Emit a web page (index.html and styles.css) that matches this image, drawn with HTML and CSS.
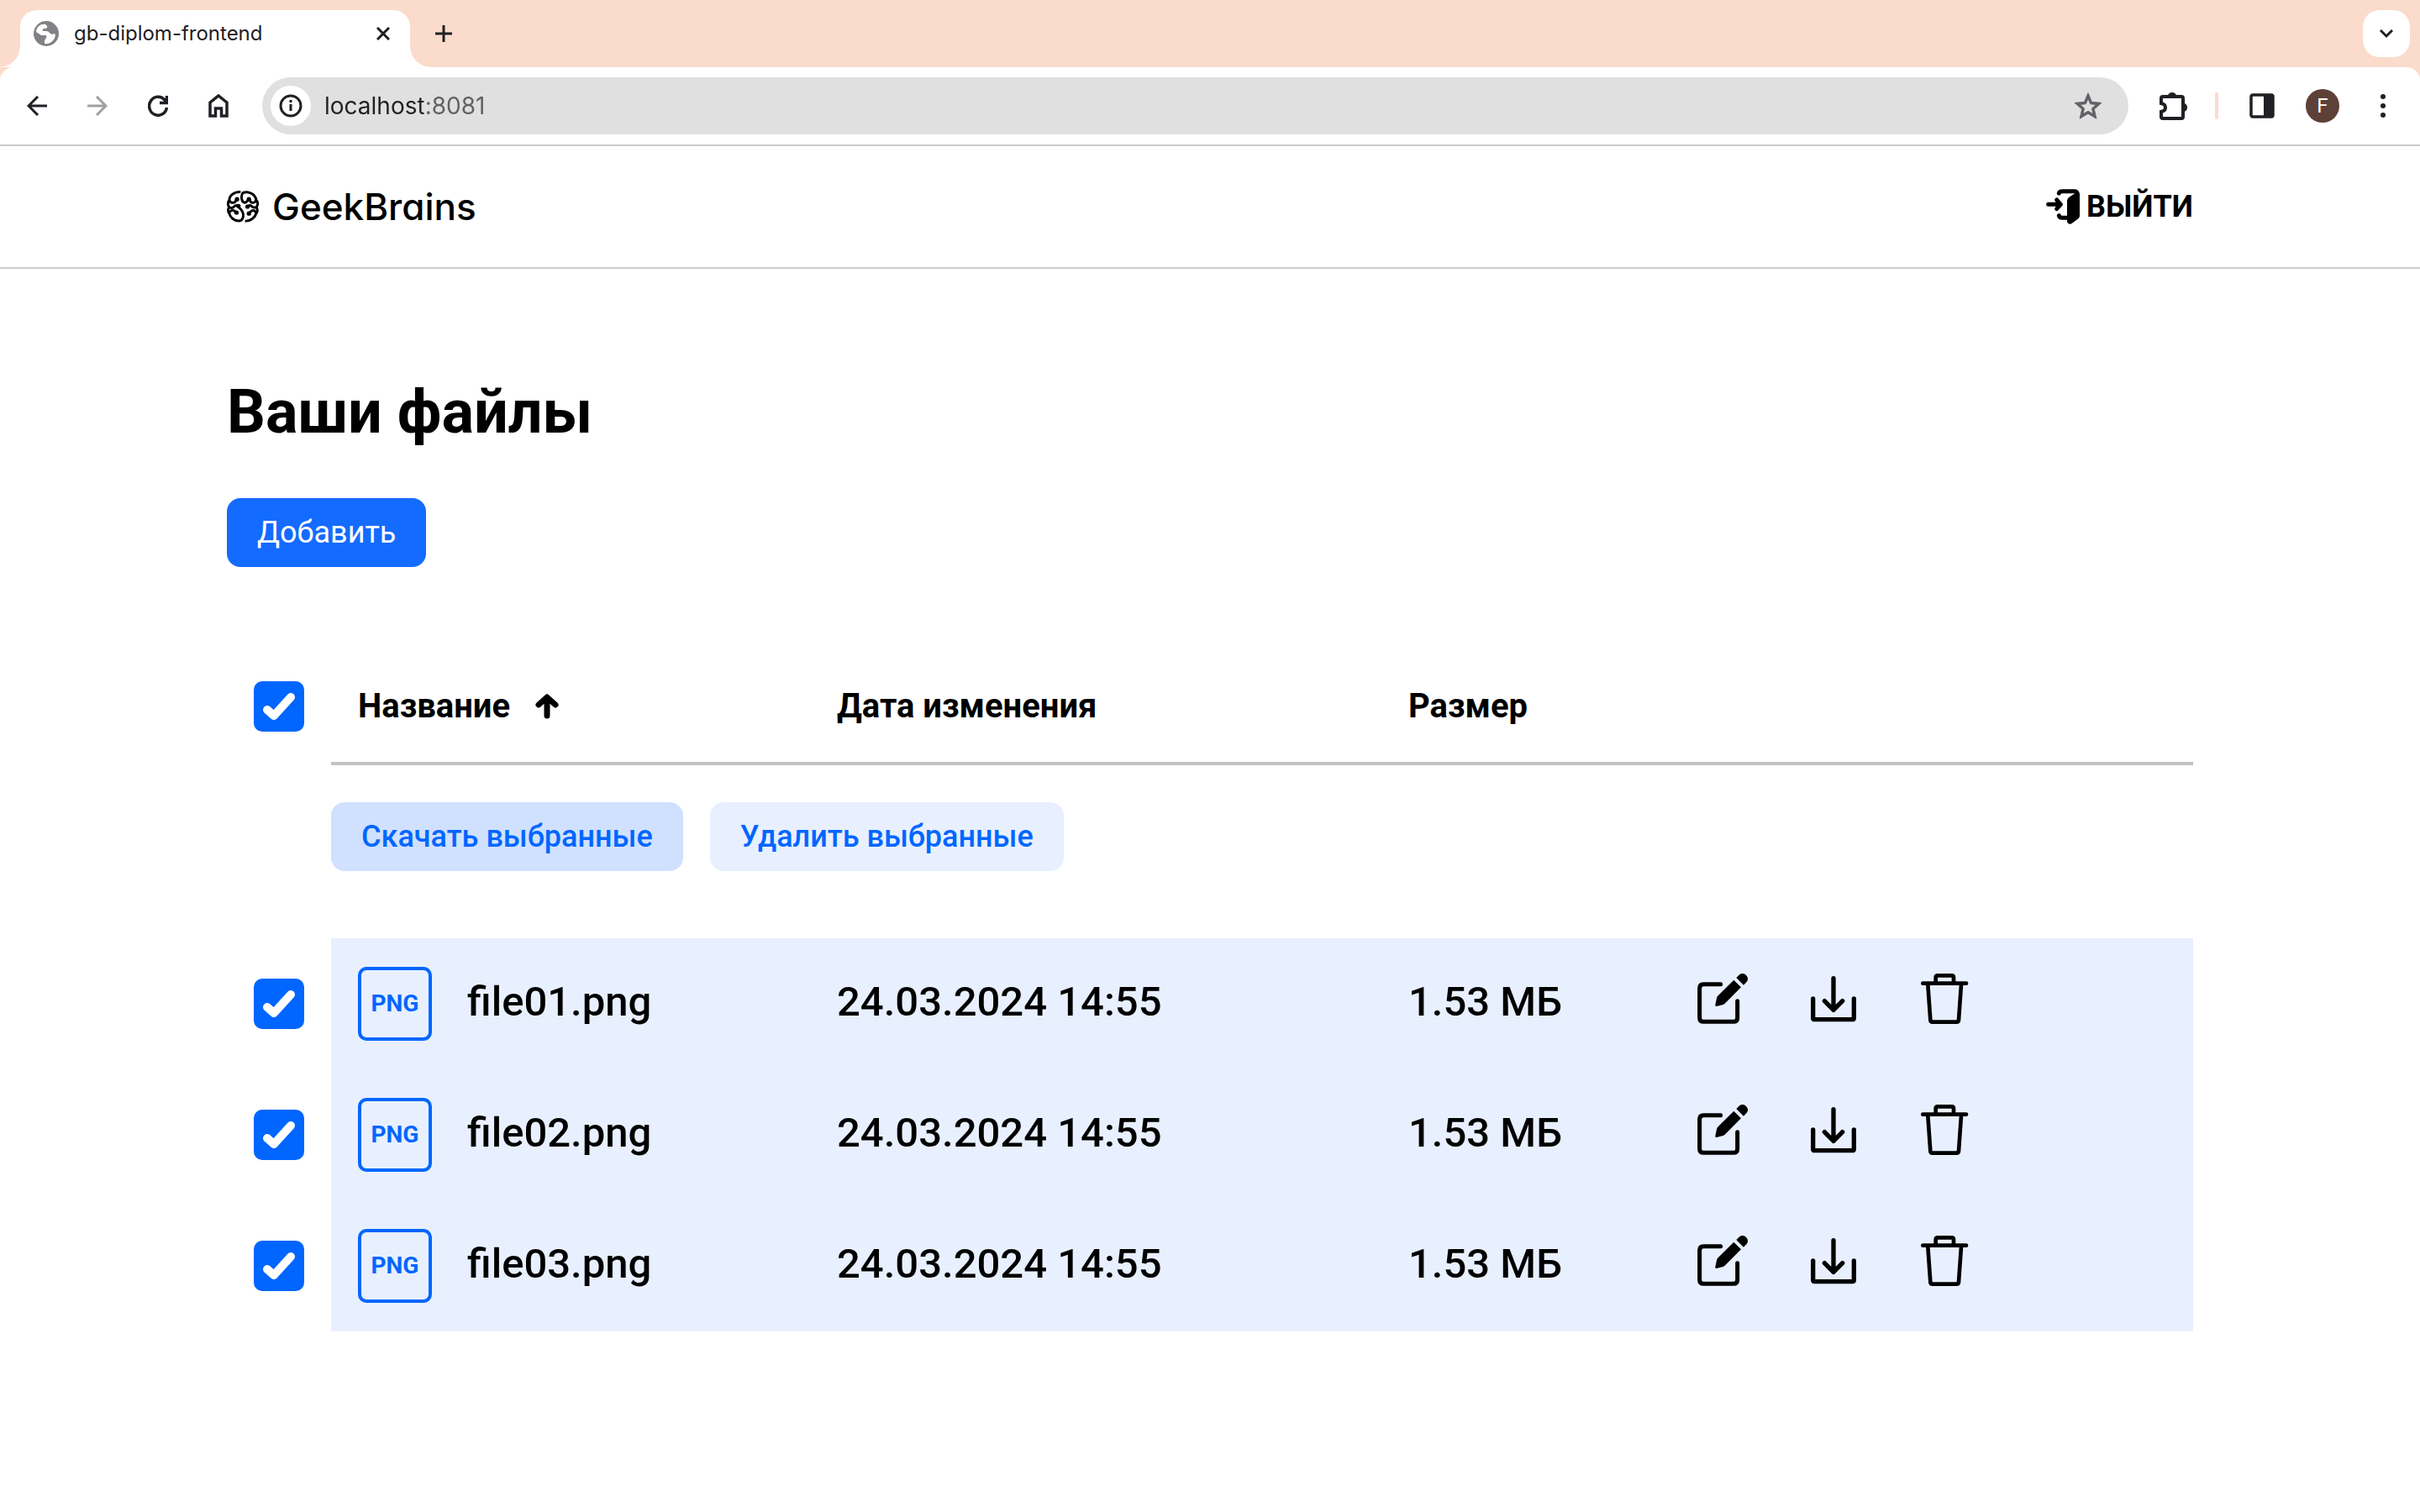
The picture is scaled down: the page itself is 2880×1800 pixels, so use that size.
FILE: index.html
```html
<!DOCTYPE html>
<html lang="ru">
<head>
<meta charset="utf-8">
<meta name="viewport" content="width=device-width, initial-scale=1">
<title>gb-diplom-frontend</title>
<link rel="stylesheet" href="styles.css">
</head>
<body>
<svg class="sprite" aria-hidden="true">
  <symbol id="edit" viewBox="0 0 180 180">
    <path fill="none" stroke="currentColor" stroke-width="15" stroke-linecap="round" d="M83 38H22Q8 38 8 52V158Q8 172 22 172H129Q143 172 143 158V98"/>
    <path fill="currentColor" d="M130 23L156 49L98 107L92 111L68 117Q63 117 64 112L70 84L74 79Z"/>
    <path fill="currentColor" d="M139 15L148 6C156 -2 167 -1 174 6C182 14 182 24 175 31L165 41Z"/>
  </symbol>
  <symbol id="download" viewBox="-9 -9 180 180">
    <g fill="none" stroke="currentColor" stroke-width="16" stroke-linecap="round" stroke-linejoin="round">
      <path d="M8 81V149Q8 155 14 155H148Q154 155 154 149V81"/>
      <path d="M81 8V121M49 89L81 121L113 89"/>
    </g>
  </symbol>
  <symbol id="trash" viewBox="-6 0 180 180">
    <g fill="none" stroke="currentColor" stroke-width="14" stroke-linecap="round" stroke-linejoin="round">
      <path d="M7 35H162"/>
      <path d="M53 33V14Q53 7 60 7H110Q117 7 117 14V33"/>
      <path d="M25 40L34 166Q35 173 41 173H128Q134 173 135 166L144 40"/>
    </g>
  </symbol>
</svg>

<div class="browser">
  <div class="tabs">
    <div class="tab">
      <svg class="favicon" viewBox="0 0 30 30" aria-hidden="true">
        <circle cx="15" cy="15" r="15" fill="#808285"/>
        <path fill="#fff" d="M14 4C8 3 3 8 3 13L9 17H14Q16 17 15 20L13 23V27Q20 28 24 22Q27 17 25 15Q21 17 19 14Q18 12 15 12H11Q10 9 13 9Q17 9 16 6Z"/>
      </svg>
      <span class="tab-title">gb-diplom-frontend</span>
      <button class="icon-btn" aria-label="Закрыть вкладку">
        <svg width="16" height="16" viewBox="0 0 16 16"><path d="M1 1L15 15M15 1L1 15" stroke="currentColor" stroke-width="3"/></svg>
      </button>
    </div>
    <button class="icon-btn new-tab" aria-label="Новая вкладка">
      <svg width="20" height="20" viewBox="0 0 20 20"><path d="M10 0V20M0 10H20" stroke="currentColor" stroke-width="3"/></svg>
    </button>
    <button class="icon-btn tab-list" aria-label="Поиск вкладок">
      <svg width="18" height="12" viewBox="0 0 18 12"><path d="M2 2L9 9L16 2" fill="none" stroke="currentColor" stroke-width="3"/></svg>
    </button>
  </div>
  <div class="toolbar">
    <div class="nav">
      <button class="icon-btn" aria-label="Назад"><svg width="24" height="24" viewBox="0 0 24 24"><path d="M24 12H2M13 1L2 12L13 23" fill="none" stroke="currentColor" stroke-width="3"/></svg></button>
      <button class="icon-btn" aria-label="Вперёд" disabled><svg width="24" height="24" viewBox="0 0 24 24"><path d="M0 12H22M11 1L22 12L11 23" fill="none" stroke="currentColor" stroke-width="3"/></svg></button>
      <button class="icon-btn" aria-label="Обновить"><svg width="24" height="26" viewBox="0 0 24 26"><path d="M22.500 15A10.500 11 0 1 1 20 6L23 9M22.500 1V9.500H14" fill="none" stroke="currentColor" stroke-width="3.500"/></svg></button>
      <button class="icon-btn" aria-label="Домой"><svg width="24" height="28" viewBox="0 0 24 28"><path d="M2 26V10L12 2L22 10V26H15.500V17H8.500V26Z" fill="none" stroke="currentColor" stroke-width="3.500"/></svg></button>
    </div>
    <div class="address">
      <button class="site-info" aria-label="Сведения о сайте"><svg width="28" height="28" viewBox="0 0 28 28"><circle cx="14" cy="14" r="12" fill="none" stroke="currentColor" stroke-width="3"/><path d="M14 12V20M14 7V10" stroke="currentColor" stroke-width="3"/></svg></button>
      <input class="url" type="text" value="localhost:8081" aria-label="Адрес">
      <button class="icon-btn star" aria-label="В закладки"><svg width="32" height="32" viewBox="2 1.500 20 20"><path fill="currentColor" stroke="currentColor" stroke-width="0.600" d="M22 9.240l-7.190-.62L12 2 9.190 8.630 2 9.240l5.460 4.730L5.820 21 12 17.270 18.180 21l-1.630-7.030L22 9.240zM12 15.400l-3.760 2.270 1-4.280-3.320-2.880 4.380-.38L12 6.100l1.710 4.040 4.380.38-3.320 2.880 1 4.280L12 15.400z"/></svg></button>
    </div>
    <button class="icon-btn ext" aria-label="Расширения"><svg width="34" height="34" viewBox="0 0 34 34"><path fill="none" stroke="currentColor" stroke-width="4" d="M4 6H26Q28 6 28 8V30Q28 32 26 32H4Q2 32 2 30V24Q7 23 7 19Q7 15 2 14V8Q2 6 4 6Z"/><path fill="currentColor" d="M10 5A5 4 0 0 1 20 5ZM29 14A4 5 0 0 1 29 24Z"/></svg></button>
    <span class="divider"></span>
    <button class="icon-btn" aria-label="Боковая панель"><svg width="30" height="30" viewBox="0 0 30 30"><rect x="2" y="2" width="26" height="26" rx="2" fill="none" stroke="currentColor" stroke-width="3.500"/><path fill="currentColor" d="M17 2H28V28H17Z"/></svg></button>
    <button class="avatar" aria-label="Профиль">F</button>
    <button class="icon-btn" aria-label="Меню"><svg width="8" height="28" viewBox="0 0 8 28"><g fill="currentColor"><circle cx="4" cy="3" r="3"/><circle cx="4" cy="14" r="3"/><circle cx="4" cy="25" r="3"/></g></svg></button>
  </div>
</div>

<header class="header">
  <div class="container header-row">
    <a class="logo" href="#">
      <svg width="38" height="38" viewBox="0 0 116 116" aria-hidden="true">
        <g fill="none" stroke="currentColor" stroke-width="9" stroke-linecap="butt">
          <path d="M50 5C28 3 9 16 9 34C10 46 26 46 31 39L37 32M9 34C2 42 2 54 10 61Q20 66 27 57Q34 50 42 56"/>
          <path d="M10 59C3 66 3 76 9 83C12 98 28 110 44 110C60 108 64 88 54 72L41 57M9 80Q14 69 25 72L35 80"/>
          <path d="M80 32L68 43C52 46 50 18 58 8C72 2 98 6 106 30C107 46 90 46 86 40L80 32M106 33C114 41 114 54 106 60Q96 64 89 56Q82 50 75 58"/>
          <path d="M106 58C113 66 112 78 106 84C102 98 84 112 66 110M106 80Q100 69 90 73L80 83"/>
        </g>
        <g fill="currentColor"><circle cx="37" cy="31" r="8"/><circle cx="42" cy="56" r="8"/><circle cx="35" cy="80" r="8"/><circle cx="80" cy="31" r="8"/><circle cx="75" cy="58" r="8"/><circle cx="80" cy="83" r="8"/></g>
      </svg>
      <span>GeekBrains</span>
    </a>
    <button class="logout">
      <svg width="40" height="42" viewBox="0 0 120 126" aria-hidden="true">
        <g fill="none" stroke="currentColor" stroke-width="15" stroke-linecap="round" stroke-linejoin="round">
          <path d="M46 15Q48 8 58 8H102Q112 8 112 20"/>
          <path d="M46 95Q48 103 58 103H84"/>
          <path d="M8 55H52M38 39L52 55L38 71"/>
        </g>
        <path fill="currentColor" d="M120 18V96Q120 102 115 106L92 123Q86 127 80 124Q75 122 75 114V42Q75 34 82 29L112 10Z"/>
      </svg>
      <span>ВЫЙТИ</span>
    </button>
  </div>
</header>

<main class="container main">
  <h1 class="title">Ваши файлы</h1>
  <button class="btn btn-primary">Добавить</button>

  <table class="files">
    <colgroup><col class="c-check"><col class="c-name"><col class="c-date"><col class="c-size"><col></colgroup>
    <thead>
      <tr>
        <td class="check"><input type="checkbox" checked aria-label="Выбрать все"></td>
        <th scope="col"><button class="sort">Название
          <svg width="28" height="30" viewBox="0 0 28 30" aria-hidden="true"><path d="M14 26V5M4 13L14 4L24 13" fill="none" stroke="currentColor" stroke-width="7" stroke-linecap="round" stroke-linejoin="round"/></svg></button></th>
        <th scope="col">Дата изменения</th>
        <th scope="col">Размер</th>
        <th></th>
      </tr>
    </thead>
    <tbody>
      <tr class="bulk">
        <td></td>
        <td colspan="4">
          <div class="bulk-actions">
            <button class="btn btn-soft active">Скачать выбранные</button>
            <button class="btn btn-soft">Удалить выбранные</button>
          </div>
        </td>
      </tr>
      <tr class="file">
        <td class="check"><input type="checkbox" checked aria-label="file01.png"></td>
        <td><div class="name"><span class="type">PNG</span><span class="text">file01.png</span></div></td>
        <td><div class="text">24.03.2024 14:55</div></td>
        <td><div class="text">1.53 МБ</div></td>
        <td><div class="actions">
          <button aria-label="Переименовать"><svg><use href="#edit"/></svg></button>
          <button aria-label="Скачать"><svg><use href="#download"/></svg></button>
          <button aria-label="Удалить"><svg><use href="#trash"/></svg></button>
        </div></td>
      </tr>
      <tr class="file">
        <td class="check"><input type="checkbox" checked aria-label="file02.png"></td>
        <td><div class="name"><span class="type">PNG</span><span class="text">file02.png</span></div></td>
        <td><div class="text">24.03.2024 14:55</div></td>
        <td><div class="text">1.53 МБ</div></td>
        <td><div class="actions">
          <button aria-label="Переименовать"><svg><use href="#edit"/></svg></button>
          <button aria-label="Скачать"><svg><use href="#download"/></svg></button>
          <button aria-label="Удалить"><svg><use href="#trash"/></svg></button>
        </div></td>
      </tr>
      <tr class="file">
        <td class="check"><input type="checkbox" checked aria-label="file03.png"></td>
        <td><div class="name"><span class="type">PNG</span><span class="text">file03.png</span></div></td>
        <td><div class="text">24.03.2024 14:55</div></td>
        <td><div class="text">1.53 МБ</div></td>
        <td><div class="actions">
          <button aria-label="Переименовать"><svg><use href="#edit"/></svg></button>
          <button aria-label="Скачать"><svg><use href="#download"/></svg></button>
          <button aria-label="Удалить"><svg><use href="#trash"/></svg></button>
        </div></td>
      </tr>
    </tbody>
  </table>
</main>
</body>
</html>
```

FILE: styles.css
```css
*,
*::before,
*::after {
  box-sizing: border-box;
}

body {
  margin: 0;
  background: #fff;
  color: #000;
  font-family: Roboto, "Noto Sans", sans-serif;
}

button {
  margin: 0;
  padding: 0;
  border: 0;
  background: none;
  color: inherit;
  font: inherit;
  cursor: pointer;
}

svg {
  display: block;
}

.sprite {
  position: absolute;
  width: 0;
  height: 0;
}

/* Browser frame */

.browser {
  background: #fbdbcb;
  color: #1f2024;
  font-family: Inter, Roboto, sans-serif;
}

.tabs {
  display: flex;
  align-items: center;
  height: 80px;
  padding: 0 12px 0 24px;
}

.tab {
  position: relative;
  display: flex;
  align-items: center;
  align-self: flex-end;
  gap: 18px;
  width: 464px;
  height: 68px;
  padding: 0 20px 12px 16px;
  border-radius: 20px 20px 0 0;
  background: #fff;
}

.tab::before,
.tab::after {
  content: "";
  position: absolute;
  bottom: 0;
  width: 24px;
  height: 24px;
}

.tab::before {
  right: 100%;
  background: radial-gradient(circle at 0 0, transparent 23px, #fff 24px);
}

.tab::after {
  left: 100%;
  background: radial-gradient(circle at 100% 0, transparent 23px, #fff 24px);
}

.favicon {
  width: 30px;
  height: 30px;
}

.tab-title {
  flex: 1;
  font-size: 24px;
  line-height: 32px;
}

.icon-btn {
  display: grid;
  place-items: center;
  min-width: 24px;
}

.icon-btn:disabled {
  color: #a0a0a0;
}

.new-tab {
  width: 80px;
}

.tab-list {
  width: 56px;
  height: 56px;
  margin-left: auto;
  border-radius: 20px;
  background: #fff;
}

.toolbar {
  display: flex;
  align-items: center;
  height: 94px;
  padding: 12px 32px;
  border-bottom: 2px solid #cbcbcb;
  border-radius: 16px 16px 0 0;
  background: #fff;
}

.nav {
  display: flex;
  gap: 48px;
  margin-right: 40px;
}

.address {
  display: flex;
  flex: 1;
  align-items: center;
  gap: 16px;
  height: 68px;
  padding: 0 32px 0 10px;
  border-radius: 34px;
  background: #e0e0e0;
}

.site-info {
  display: grid;
  place-items: center;
  width: 48px;
  height: 48px;
  border-radius: 50%;
  background: #fff;
}

.url {
  flex: 1;
  min-width: 0;
  padding: 0;
  border: 0;
  background: linear-gradient(90deg, #1f2024 118px, #606164 118px);
  background-clip: text;
  color: transparent;
  font: 28px/36px Inter, Roboto, sans-serif;
}

.star {
  color: #606164;
}

.ext {
  margin: 0 32px 0 37px;
}

.divider {
  width: 4px;
  height: 32px;
  margin-right: 37px;
  border-radius: 2px;
  background: #fbdbcb;
}

.avatar {
  width: 40px;
  height: 40px;
  margin: 0 40px 0 37px;
  border-radius: 50%;
  background: #5d4037;
  color: #fff;
  font: 24px/40px Roboto, sans-serif;
}

/* Page */

.container {
  width: 100%;
  max-width: 2404px;
  margin: 0 auto;
  padding: 0 32px;
}

.header {
  border-bottom: 2px solid #ccc;
}

.header-row {
  display: flex;
  align-items: center;
  justify-content: space-between;
  height: 144px;
}

.logo {
  display: flex;
  align-items: center;
  gap: 16px;
  color: #000;
  font: 500 44px/52px Inter, sans-serif;
  font-feature-settings: "cv11";
  text-decoration: none;
}

.logout {
  display: flex;
  align-items: center;
  gap: 8px;
  font: 700 36px/44px Roboto, sans-serif;
}

.main {
  padding-top: 129px;
  padding-bottom: 128px;
}

.title {
  margin: 0 0 60px;
  font-size: 72px;
  font-weight: 700;
  line-height: 84px;
}

.btn {
  padding: 20px 36px;
  border-radius: 16px;
  font-size: 36px;
  line-height: 42px;
}

.btn-primary {
  background: #146bff;
  color: #fff;
}

.btn-soft {
  background: #e8f0ff;
  color: #06f;
  font-weight: 500;
}

.btn-soft.active {
  background: #d0e1ff;
}

.files {
  width: 100%;
  margin-top: 100px;
  border-spacing: 0;
  table-layout: fixed;
  font-size: 49px;
  font-weight: 500;
  line-height: 56px;
}

.c-check {
  width: 124px;
}

.c-name {
  width: 570px;
}

.c-date {
  width: 680px;
}

.c-size {
  width: 344px;
}

.files td,
.files th {
  padding: 0 0 0 32px;
  text-align: left;
}

.files th {
  height: 136px;
  border-bottom: 4px solid #c3c3c3;
  font-size: 40px;
  font-weight: 700;
}

.files thead .check {
  padding-bottom: 4px;
}

.sort {
  display: flex;
  align-items: center;
  gap: 30px;
}

.check input {
  display: block;
  width: 60px;
  height: 60px;
  margin: 0;
  appearance: none;
  border: 4px solid #06f;
  border-radius: 10px;
}

.check input:checked {
  background: #06f url("data:image/svg+xml,%3Csvg xmlns='http://www.w3.org/2000/svg' viewBox='0 0 60 60'%3E%3Cpath d='M16 34L24 41L44 19' fill='none' stroke='white' stroke-width='10' stroke-linecap='round' stroke-linejoin='round'/%3E%3C/svg%3E") border-box center / 60px 60px;
}

.files .bulk td {
  padding: 44px 0 80px;
}

.bulk-actions {
  display: flex;
  gap: 32px;
}

.file td {
  height: 156px;
}

.file td:not(.check) {
  background: #e8f0ff;
}

.name {
  display: flex;
  align-items: center;
  gap: 42px;
}

.text {
  padding-bottom: 4px;
}

.type {
  width: 88px;
  height: 88px;
  border: 4px solid #06f;
  border-radius: 10px;
  color: #06f;
  font-size: 28px;
  font-weight: 700;
  line-height: 80px;
  text-align: center;
}

.actions {
  display: flex;
  gap: 72px;
  padding-bottom: 12px;
}

.actions svg {
  width: 60px;
  height: 60px;
}
```
